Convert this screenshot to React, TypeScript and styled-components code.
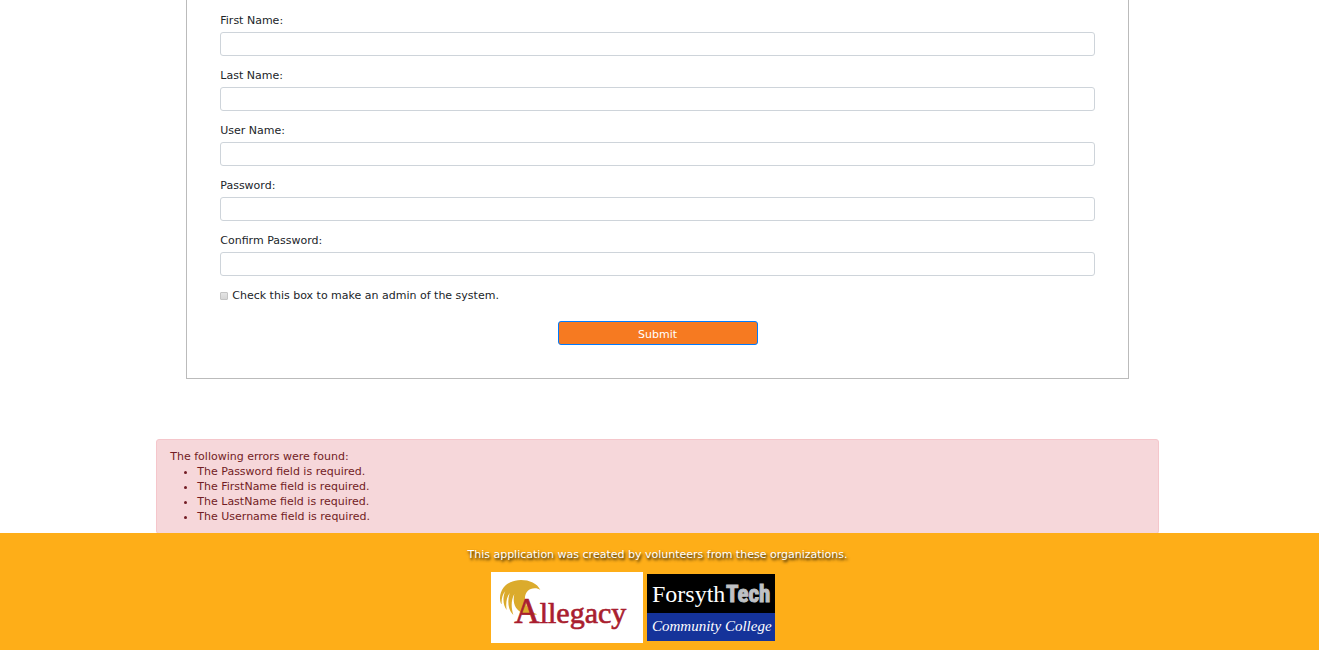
import React from "react";
import styled, { createGlobalStyle } from "styled-components";

const GlobalStyle = createGlobalStyle`
  *, *::before, *::after { box-sizing: border-box; }
  body {
    margin: 0;
    background: #fff;
    color: #212529;
    font-family: Verdana, "DejaVu Sans", sans-serif;
    font-size: 11px;
    line-height: 15px;
  }
`;

const Page = styled.main`
  width: 76%;
  margin: 0 auto;
  padding-bottom: 115px;
  position: relative;
  right: 2px;
`;

const Card = styled.form`
  margin: 0 30px 60px;
  padding: 13px 33px 33px;
  border: 1px solid #bbb;
  border-top: 0;
`;

const Field = styled.div`
  display: flex;
  flex-direction: column;
  gap: 4px;
  margin-bottom: 12px;
`;

const TextInput = styled.input`
  width: 100%;
  height: 24px;
  padding: 3px 7px;
  border: 1px solid #ced4da;
  border-radius: 3px;
  background: #fff;
  font: inherit;
`;

const CheckRow = styled.label`
  display: flex;
  align-items: center;
  gap: 4px;
`;

const Checkbox = styled.input`
  appearance: none;
  width: 8px;
  height: 8px;
  margin: 0;
  border: 1px solid #c4c4c4;
  border-radius: 1px;
  background: linear-gradient(#e4e4e4, #d6d6d6);
  &:checked { background: #f67a21; }
`;

const SubmitButton = styled.button`
  display: block;
  width: 200px;
  height: 24px;
  margin: 18px auto 0;
  padding: 2px 8px 0;
  border: 1px solid #007bff;
  border-radius: 3px;
  background: #f67a21;
  color: #fff;
  font: inherit;
  cursor: pointer;
`;

const Alert = styled.section`
  padding: 9px 13px;
  border: 1px solid #f5c6cb;
  border-radius: 3px;
  background: #f6d7da;
  color: #721c24;
`;

const ErrorList = styled.ul`
  margin: 0;
  padding-left: 27px;
`;

const Footer = styled.footer`
  position: fixed;
  right: 0;
  bottom: 0;
  left: 0;
  padding: 14px 4px 7px 0;
  background: #feae18;
  color: #fff;
  text-align: center;
  text-shadow: 1px 2px 3px #000;
`;

const Logos = styled.div`
  display: flex;
  align-items: center;
  justify-content: center;
  gap: 4px;
  margin-top: 10px;
  padding-right: 49px;
  text-shadow: none;
`;

const Logo = styled.svg`
  display: block;
`;

const fields = [
  { id: "firstName", label: "First Name:", type: "text" },
  { id: "lastName", label: "Last Name:", type: "text" },
  { id: "userName", label: "User Name:", type: "text" },
  { id: "password", label: "Password:", type: "password" },
  { id: "confirmPassword", label: "Confirm Password:", type: "password" },
];

const errors = ["Password", "FirstName", "LastName", "Username"];

const AllegacyLogo = () => (
  <Logo width="152" height="71" viewBox="0 0 456 213" role="img" aria-label="Allegacy">
    <rect width="456" height="213" fill="#fff" />
    <path
      d="M148 54 C139 34 115 24 90 24 C54 24 28 46 27 78 C27 88 29 94 32 97 C31 82 34 68 43 57 C34 76 36 100 47 114 C44 96 46 77 56 63 C48 88 52 116 67 129 C60 106 60 84 70 66 C64 92 72 112 92 122 C108 130 126 131 139 127 C116 119 104 104 102 84 C100 62 113 49 131 49 C138 49 144 51 148 54Z"
      fill="#dbab2c"
    />
    <g fill="#a91e2f" stroke="#a91e2f" strokeWidth="2" fontFamily="'Liberation Serif', serif">
      <text x="70" y="152" fontSize="106">A</text>
      <text x="146" y="152" fontSize="90">llegacy</text>
    </g>
  </Logo>
);

const ForsythLogo = () => (
  <Logo width="128" height="67" viewBox="0 0 128 67" role="img" aria-label="ForsythTech Community College">
    <rect width="128" height="67" fill="#000" />
    <rect y="39" width="128" height="28" fill="#15339a" />
    <text x="5" y="28" fill="#fff" fontFamily="'Liberation Serif', serif" fontSize="24">Forsyth</text>
    <text x="79" y="28" fill="#bfc1c4" stroke="#bfc1c4" strokeWidth="1" fontFamily="'Roboto Condensed', 'Open Sans Condensed', 'Liberation Sans', sans-serif" fontWeight="700" fontSize="23">Tech</text>
    <text x="5" y="57" fill="#fff" fontFamily="'Liberation Serif', serif" fontStyle="italic" fontSize="15">Community College</text>
  </Logo>
);

export default function App() {
  return (
    <>
      <GlobalStyle />
      <Page>
        <Card onSubmit={(event: React.FormEvent) => event.preventDefault()}>
          {fields.map(({ id, label, type }) => (
            <Field key={id}>
              <label htmlFor={id}>{label}</label>
              <TextInput id={id} name={id} type={type} />
            </Field>
          ))}
          <CheckRow>
            <Checkbox type="checkbox" name="admin" />
            Check this box to make an admin of the system.
          </CheckRow>
          <SubmitButton type="submit">Submit</SubmitButton>
        </Card>
        <Alert role="alert">
          The following errors were found:
          <ErrorList>
            {errors.map((name) => (
              <li key={name}>The {name} field is required.</li>
            ))}
          </ErrorList>
        </Alert>
      </Page>
      <Footer>
        This application was created by volunteers from these organizations.
        <Logos>
          <AllegacyLogo />
          <ForsythLogo />
        </Logos>
      </Footer>
    </>
  );
}
